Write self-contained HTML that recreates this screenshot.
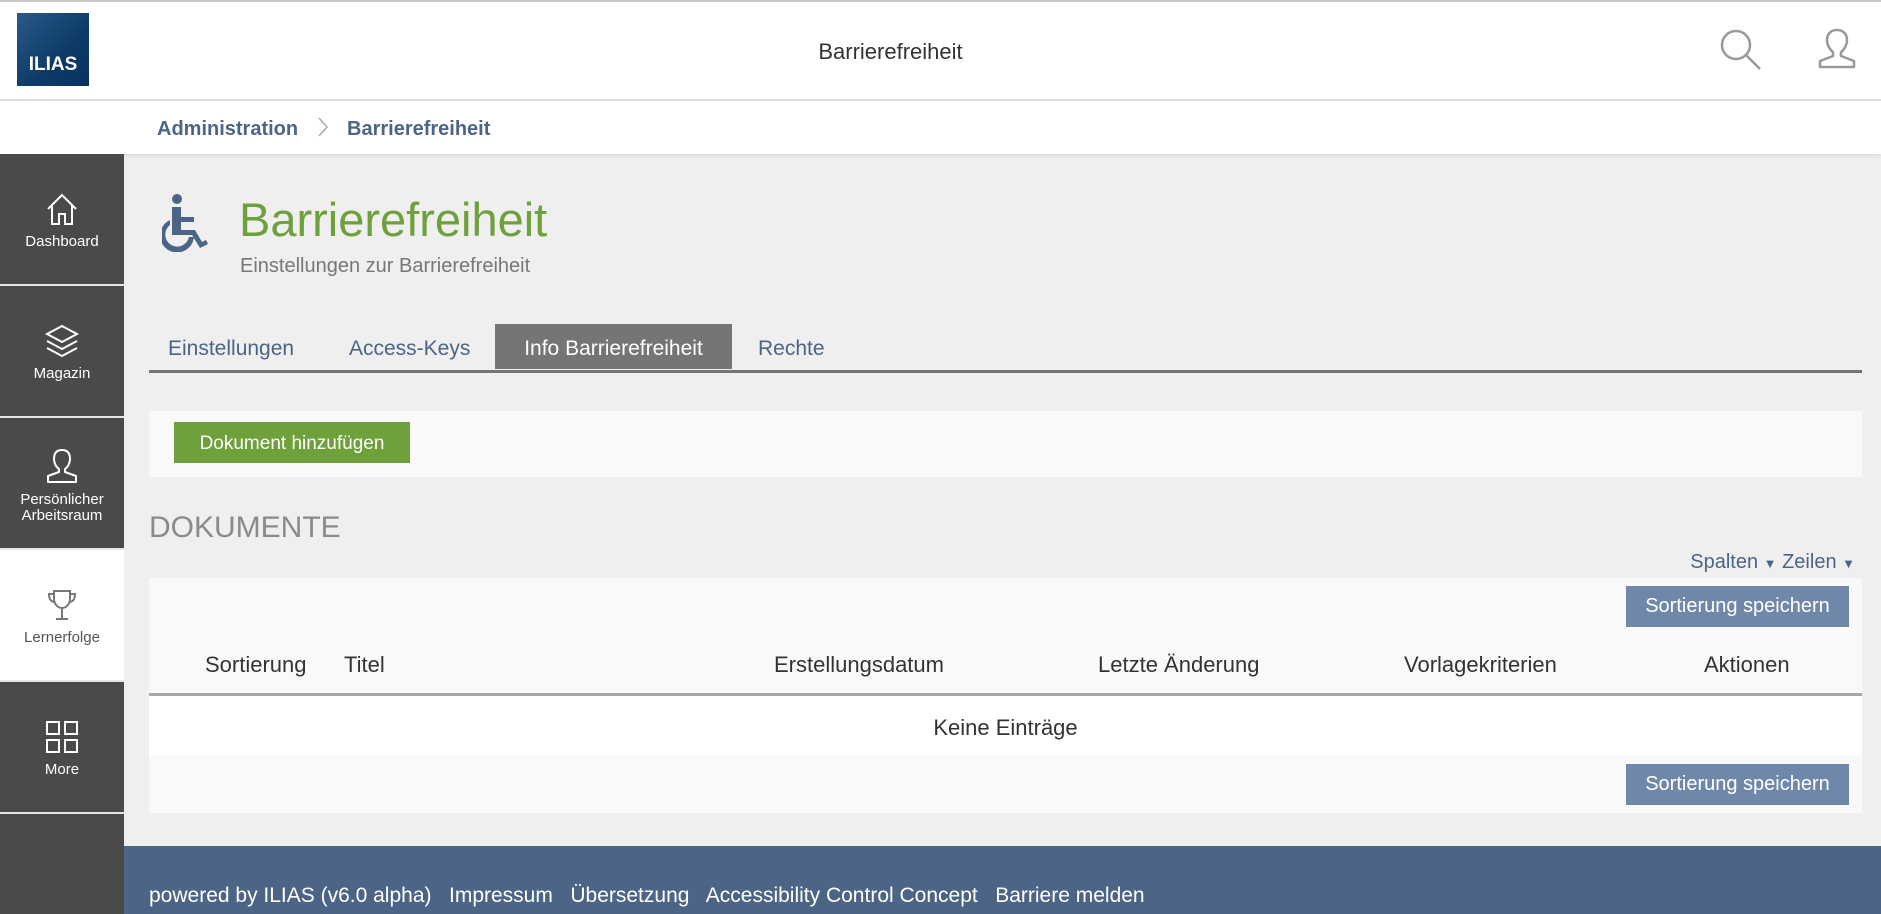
<!DOCTYPE html>
<html><head><meta charset="utf-8"><style>
*{margin:0;padding:0;box-sizing:border-box}
body{width:1881px;height:914px;overflow:hidden;background:#efefef;font-family:"Liberation Sans",sans-serif;position:relative}
.a{position:absolute;white-space:nowrap}
.hdr{left:0;top:0;width:1881px;height:101px;background:#fff;border-top:2px solid #c8c8c8;border-bottom:2px solid #ddd}
.bc{left:0;top:101px;width:1881px;height:53px;background:#fff;box-shadow:0 2px 3px rgba(0,0,0,.08)}
.side{left:0;top:154px;width:124px;height:760px;background:#4a4a4a}
.it{position:absolute;left:0;width:124px;height:130px;color:#fff;font-size:15px;text-align:center;line-height:16px}
.it svg{display:block;margin:0 auto 8px}
.sep{position:absolute;left:0;width:124px;height:2px;background:#e6e6e6}
.tab{top:324px;height:45px;line-height:49px;font-size:21px;color:#4c6586}
.th{top:652px;font-size:22px;color:#333}
.btn2{background:#6f88aa;color:#fff;font-size:20px;text-align:center;line-height:41px;width:223px;height:41px}
</style></head><body>
<div class="a hdr"></div>
<div class="a" style="left:17px;top:13px;width:72px;height:73px;background:linear-gradient(135deg,#2a5a8a,#0d3a66 60%,#0a3260);"></div>
<div class="a" style="left:17px;top:54px;width:72px;text-align:center;color:#fff;font-weight:bold;font-size:19px">ILIAS</div>
<div class="a" style="left:0;width:1781px;top:39px;text-align:center;font-size:22px;color:#333">Barrierefreiheit</div>
<svg class="a" style="left:1718px;top:28px" width="46" height="44" viewBox="0 0 46 44" fill="none" stroke="#999" stroke-width="2.5"><circle cx="18" cy="17" r="14"/><path d="M28 27l14 14"/></svg>
<svg class="a" style="left:1817px;top:28px" width="40" height="42" viewBox="0 0 40 42" fill="none" stroke="#999" stroke-width="2.5" stroke-linejoin="round"><path d="M20 2c-7 0-10 5-10 10 0 5 3 10 6 12v4L3 33v6h34v-6l-13-5v-4c3-2 6-7 6-12 0-5-3-10-10-10z"/></svg>
<div class="a bc"></div>
<div class="a" style="left:157px;top:118px;font-size:20px;color:#4c6586;font-weight:bold">Administration</div>
<svg class="a" style="left:317px;top:116px" width="12" height="22" viewBox="0 0 12 22" fill="none" stroke="#aaa" stroke-width="1.5"><path d="M2 2l8 9-8 9"/></svg>
<div class="a" style="left:347px;top:118px;font-size:20px;color:#4c6586;font-weight:bold">Barrierefreiheit</div>
<div class="a side">
 <div class="it" style="top:0;padding-top:38px"><svg width="34" height="34" viewBox="0 0 34 34" fill="none" stroke="#fff" stroke-width="2"><path d="M3 17L17 3l14 14M7 13v19h7V22h6v10h7V13"/></svg>Dashboard</div>
 <div class="sep" style="top:130px"></div>
 <div class="it" style="top:132px;padding-top:38px"><svg width="36" height="34" viewBox="0 0 36 34" fill="none" stroke="#fff" stroke-width="2"><path d="M18 2L3 10l15 8 15-8z"/><path d="M3 17l15 8 15-8"/><path d="M3 24l15 8 15-8"/></svg>Magazin</div>
 <div class="sep" style="top:262px"></div>
 <div class="it" style="top:264px;padding-top:30px"><svg width="34" height="36" viewBox="0 0 34 36" fill="none" stroke="#fff" stroke-width="2" stroke-linejoin="round"><path d="M17 2c-6 0-8 4-8 9 0 4 2 8 5 10v3L3 28v6h28v-6l-11-4v-3c3-2 5-6 5-10 0-5-2-9-8-9z"/></svg>Persönlicher<br>Arbeitsraum</div>
 <div class="sep" style="top:394px"></div>
 <div class="it" style="top:396px;background:#fff;color:#555;padding-top:38px"><svg width="34" height="34" viewBox="0 0 34 34" fill="none" stroke="#777" stroke-width="2"><path d="M9 3h16v8c0 5-4 9-8 9s-8-4-8-9z"/><path d="M9 6H4c0 5 2 8 6 8M25 6h5c0 5-2 8-6 8M17 20v10M11 31h12"/></svg>Lernerfolge</div>
 <div class="sep" style="top:526px"></div>
 <div class="it" style="top:528px;background:#4a4a4a;padding-top:38px"><svg width="34" height="34" viewBox="0 0 34 34" fill="none" stroke="#fff" stroke-width="2"><rect x="2" y="2" width="12" height="12"/><rect x="20" y="2" width="12" height="12"/><rect x="2" y="20" width="12" height="12"/><rect x="20" y="20" width="12" height="12"/></svg>More</div>
 <div class="sep" style="top:658px"></div>
</div>
<svg class="a" style="left:162px;top:192px" width="50" height="60" viewBox="0 0 50 60" fill="#4c6586"><circle cx="15" cy="7" r="5"/><path d="M10 15h9v10h13v5H19v8h14l7 12 4-2 2 4-8 4-8-13H10z"/><path d="M8 28v5a12 12 0 1 0 19 12h5A17 17 0 1 1 8 28z"/></svg>
<div class="a" style="left:239px;top:192px;font-size:47px;color:#6ea03c">Barrierefreiheit</div>
<div class="a" style="left:240px;top:255px;font-size:20px;color:#777">Einstellungen zur Barrierefreiheit</div>
<div class="a tab" style="left:168px">Einstellungen</div>
<div class="a tab" style="left:349px">Access-Keys</div>
<div class="a tab" style="left:495px;width:237px;background:#757575;color:#fff;text-align:center">Info Barrierefreiheit</div>
<div class="a tab" style="left:758px">Rechte</div>
<div class="a" style="left:149px;top:370px;width:1713px;height:3px;background:#757575"></div>
<div class="a" style="left:149px;top:411px;width:1713px;height:66px;background:#f9f9f9"></div>
<div class="a" style="left:174px;top:422px;width:236px;height:41px;background:#6ea03c;color:#fff;font-size:19px;line-height:43px;text-align:center">Dokument hinzufügen</div>
<div class="a" style="left:149px;top:511px;font-size:30px;color:#8a8a8a">DOKUMENTE</div>
<div class="a" style="right:26px;top:551px;font-size:20px;color:#4c6586">Spalten <span style="font-size:13px">&#9660;</span> Zeilen <span style="font-size:13px">&#9660;</span></div>
<div class="a" style="left:149px;top:578px;width:1713px;height:116px;background:#f9f9f9"></div>
<div class="a btn2" style="left:1626px;top:586px">Sortierung speichern</div>
<div class="a th" style="left:205px">Sortierung</div>
<div class="a th" style="left:344px">Titel</div>
<div class="a th" style="left:774px">Erstellungsdatum</div>
<div class="a th" style="left:1098px">Letzte Änderung</div>
<div class="a th" style="left:1404px">Vorlagekriterien</div>
<div class="a th" style="left:1704px">Aktionen</div>
<div class="a" style="left:149px;top:693px;width:1713px;height:3px;background:#a8a8a8"></div>
<div class="a" style="left:149px;top:696px;width:1713px;height:59px;background:#fff"></div>
<div class="a" style="left:149px;width:1713px;top:715px;text-align:center;font-size:22px;color:#333">Keine Einträge</div>
<div class="a" style="left:149px;top:755px;width:1713px;height:58px;background:#f9f9f9"></div>
<div class="a btn2" style="left:1626px;top:764px">Sortierung speichern</div>
<div class="a" style="left:124px;top:846px;width:1757px;height:68px;background:#4c6586"></div>
<div class="a" style="left:149px;top:884px;font-size:21px;color:#fff">powered by ILIAS (v6.0 alpha)&nbsp;&nbsp; Impressum&nbsp;&nbsp; Übersetzung&nbsp;&nbsp; Accessibility Control Concept&nbsp;&nbsp; Barriere melden</div>
</body></html>
